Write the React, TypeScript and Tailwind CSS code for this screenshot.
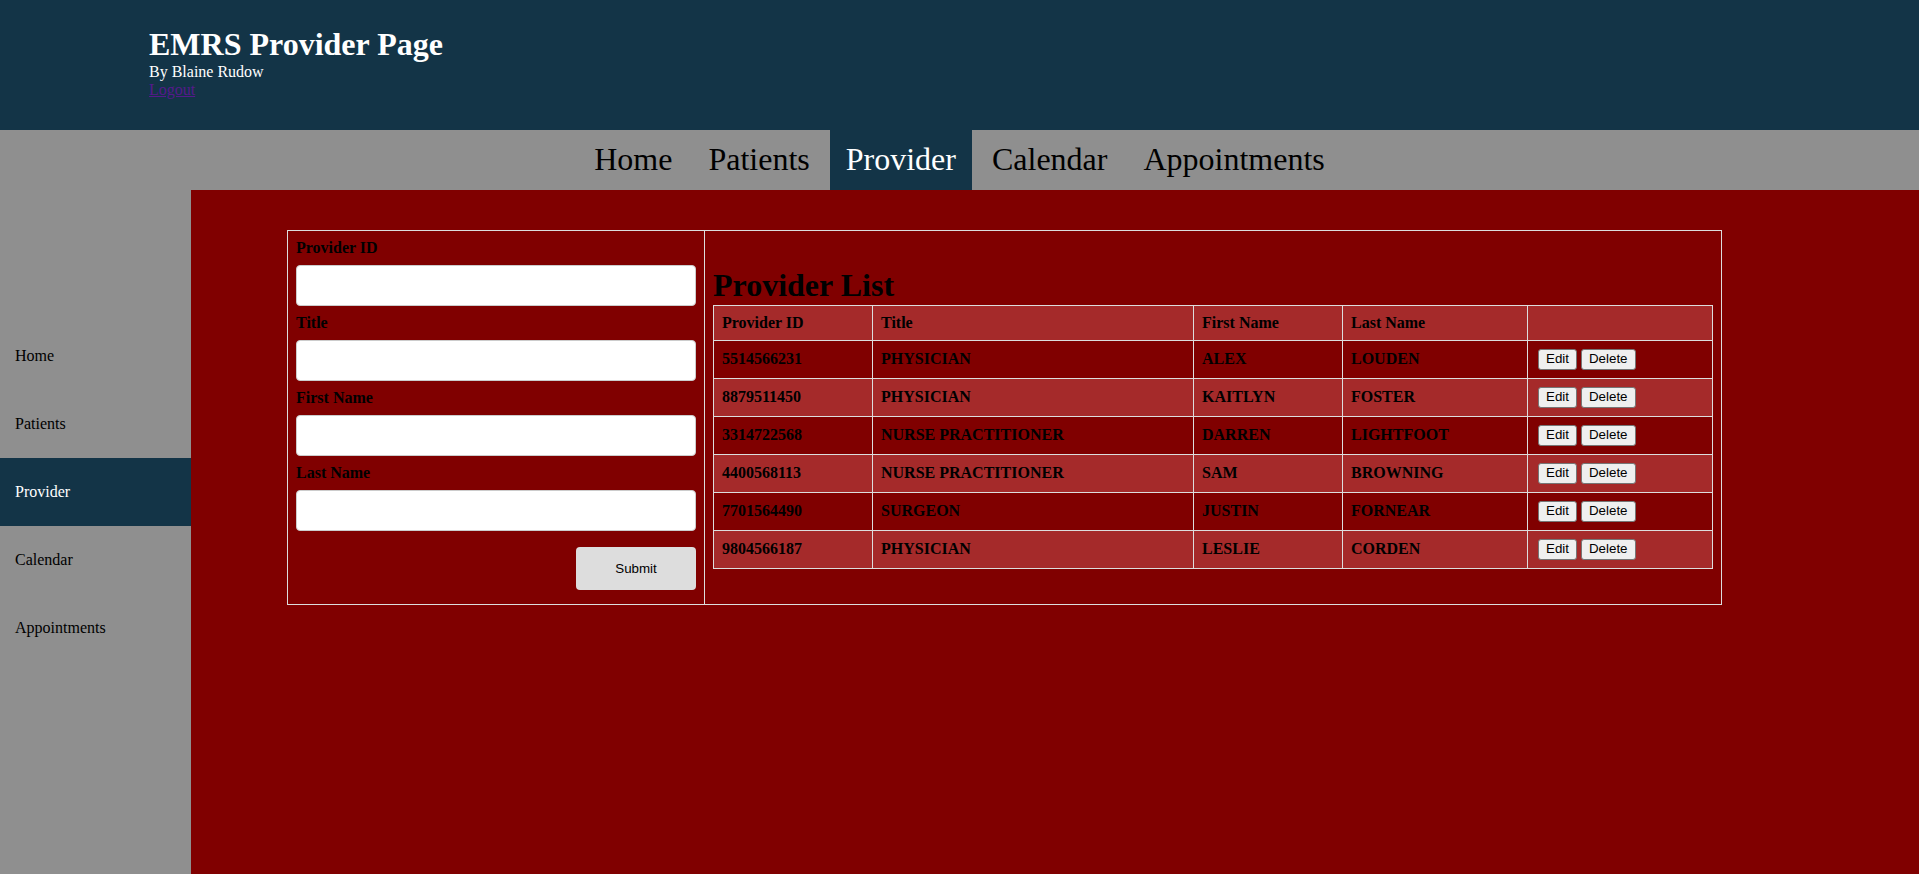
const navItems = ['Home', 'Patients', 'Provider', 'Calendar', 'Appointments'];

const providers = [
  { id: '5514566231', title: 'PHYSICIAN', first: 'ALEX', last: 'LOUDEN' },
  { id: '8879511450', title: 'PHYSICIAN', first: 'KAITLYN', last: 'FOSTER' },
  { id: '3314722568', title: 'NURSE PRACTITIONER', first: 'DARREN', last: 'LIGHTFOOT' },
  { id: '4400568113', title: 'NURSE PRACTITIONER', first: 'SAM', last: 'BROWNING' },
  { id: '7701564490', title: 'SURGEON', first: 'JUSTIN', last: 'FORNEAR' },
  { id: '9804566187', title: 'PHYSICIAN', first: 'LESLIE', last: 'CORDEN' },
];

const fields = ['Provider ID', 'Title', 'First Name', 'Last Name'];

function SmallButton({ label }: { label: string }) {
  return (
    <button className="h-[21px] rounded-[3px] border border-[#767676] bg-[#efefef] px-[7px] font-['Liberation_Sans',Arial,sans-serif] text-[13.33px] font-normal leading-none text-black">
      {label}
    </button>
  );
}

export default function App() {
  return (
    <div className="flex h-screen flex-col overflow-hidden font-['Liberation_Serif','Times_New_Roman',serif] leading-[normal]">
      <header className="h-[130px] shrink-0 bg-[#133447] pl-[149px] pt-[26px] text-white">
        <h1 className="text-[32px] font-bold leading-[normal]">EMRS Provider Page</h1>
        <p className="text-[16px]">By Blaine Rudow</p>
        <a href="#" className="text-[16px] text-[#551a8b] underline">
          Logout
        </a>
      </header>

      <nav className="flex h-[60px] shrink-0 justify-center gap-[4px] bg-[#8f8f8f]">
        {navItems.map((item) => (
          <div
            key={item}
            className={
              item === 'Provider'
                ? 'flex items-center bg-[#133447] px-4 pb-[2px] text-[32px] text-white'
                : 'flex items-center px-4 pb-[2px] text-[32px] text-black'
            }>
            {item}
          </div>
        ))}
      </nav>

      <div className="flex flex-1">
        <aside className="w-[191px] shrink-0 bg-[#8f8f8f] pt-[132px]">
          {navItems.map((item) => (
            <div
              key={item}
              className={
                item === 'Provider'
                  ? 'flex h-[68px] items-center bg-[#133447] pl-[15px] text-[16px] text-white'
                  : 'flex h-[68px] items-center pl-[15px] text-[16px] text-black'
              }>
              {item}
            </div>
          ))}
        </aside>

        <main className="flex-1 bg-[#800000] pl-[96px] pt-[40px]">
          <div className="flex w-[1435px] border border-[#dddddd]">
            <form className="flex w-[416px] shrink-0 flex-col px-2 pb-[14px] pt-[8px]">
              {fields.map((f) => (
                <div key={f} className="flex flex-col">
                  <label className="text-[16px] font-bold text-black">{f}</label>
                  <input
                    type="text"
                    className="my-2 h-[41px] w-full rounded-[4px] border border-[#cccccc] bg-white"
                  />
                </div>
              ))}
              <button
                type="button"
                className="mt-2 h-[43px] w-[120px] self-end rounded-[4px] bg-[#dddddd] font-['Liberation_Sans',Arial,sans-serif] text-[13.33px] text-black">
                Submit
              </button>
            </form>

            <div className="flex flex-1 flex-col justify-center border-l border-[#dddddd] px-2">
              <h2 className="text-[32px] font-bold leading-[normal] text-black">Provider List</h2>
              <table className="mt-[1px] w-[999px] table-fixed border-collapse text-[16px] font-bold text-black">
                <colgroup>
                  <col className="w-[159px]" />
                  <col className="w-[321px]" />
                  <col className="w-[149px]" />
                  <col className="w-[185px]" />
                  <col className="w-[185px]" />
                </colgroup>
                <thead>
                  <tr className="bg-[#a52a2a]">
                    <th className="h-[35px] border border-[#dddddd] p-2 text-left">Provider ID</th>
                    <th className="h-[35px] border border-[#dddddd] p-2 text-left">Title</th>
                    <th className="h-[35px] border border-[#dddddd] p-2 text-left">First Name</th>
                    <th className="h-[35px] border border-[#dddddd] p-2 text-left">Last Name</th>
                    <th className="h-[35px] border border-[#dddddd] p-2"></th>
                  </tr>
                </thead>
                <tbody>
                  {providers.map((p, i) => (
                    <tr key={p.id} className={i % 2 === 1 ? 'bg-[#a52a2a]' : ''}>
                      <td className="border border-[#dddddd] p-2">{p.id}</td>
                      <td className="border border-[#dddddd] p-2">{p.title}</td>
                      <td className="border border-[#dddddd] p-2">{p.first}</td>
                      <td className="border border-[#dddddd] p-2">{p.last}</td>
                      <td className="border border-[#dddddd] p-2">
                        <div className="ml-[2px] flex gap-[4px]">
                          <SmallButton label="Edit" />
                          <SmallButton label="Delete" />
                        </div>
                      </td>
                    </tr>
                  ))}
                </tbody>
              </table>
            </div>
          </div>
        </main>
      </div>
    </div>
  );
}
